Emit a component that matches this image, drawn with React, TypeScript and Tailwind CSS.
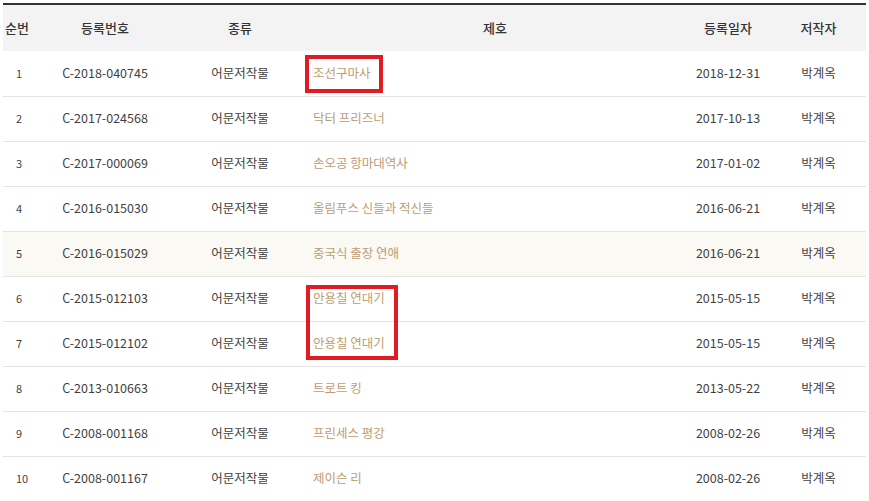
import React from "react";

interface Work {
  no: number;
  regNo: string;
  kind: string;
  title: string;
  date: string;
  author: string;
}

const WORKS: Work[] = [
  { no: 1, regNo: "C-2018-040745", kind: "어문저작물", title: "조선구마사", date: "2018-12-31", author: "박계옥" },
  { no: 2, regNo: "C-2017-024568", kind: "어문저작물", title: "닥터 프리즈너", date: "2017-10-13", author: "박계옥" },
  { no: 3, regNo: "C-2017-000069", kind: "어문저작물", title: "손오공 항마대역사", date: "2017-01-02", author: "박계옥" },
  { no: 4, regNo: "C-2016-015030", kind: "어문저작물", title: "올림푸스 신들과 적신들", date: "2016-06-21", author: "박계옥" },
  { no: 5, regNo: "C-2016-015029", kind: "어문저작물", title: "중국식 출장 연애", date: "2016-06-21", author: "박계옥" },
  { no: 6, regNo: "C-2015-012103", kind: "어문저작물", title: "안용칠 연대기", date: "2015-05-15", author: "박계옥" },
  { no: 7, regNo: "C-2015-012102", kind: "어문저작물", title: "안용칠 연대기", date: "2015-05-15", author: "박계옥" },
  { no: 8, regNo: "C-2013-010663", kind: "어문저작물", title: "트로트 킹", date: "2013-05-22", author: "박계옥" },
  { no: 9, regNo: "C-2008-001168", kind: "어문저작물", title: "프린세스 평강", date: "2008-02-26", author: "박계옥" },
  { no: 10, regNo: "C-2008-001167", kind: "어문저작물", title: "제이슨 리", date: "2008-02-26", author: "박계옥" },
];

export default function App() {
  return (
    <div
      className="relative h-[501px] w-[869px] overflow-hidden bg-white px-[3px] pt-[3px]"
      style={{ fontFamily: '"Noto Sans CJK KR", "Noto Sans", sans-serif' }}
    >
      <table className="w-full table-fixed border-collapse text-[12.5px] text-[#3f3f3f]">
        <colgroup>
          <col className="w-[32px]" />
          <col className="w-[140px]" />
          <col className="w-[130px]" />
          <col className="w-[380px]" />
          <col className="w-[86px]" />
          <col className="w-[95px]" />
        </colgroup>
        <thead>
          <tr className="h-[47px] border-t-2 border-[#333] bg-[#f3f3f3] text-[13px] text-[#333]">
            <th className="pl-[2px] text-left font-medium">순번</th>
            <th className="font-medium">등록번호</th>
            <th className="font-medium">종류</th>
            <th className="font-medium">제호</th>
            <th className="font-medium">등록일자</th>
            <th className="font-medium">저작자</th>
          </tr>
        </thead>
        <tbody>
          {WORKS.map((w) => (
            <tr
              key={w.no}
              className={`h-[45px] border-b border-[#e4e4e4] ${w.no === 5 ? "bg-[#faf9f4]" : ""}`}
            >
              <td className="pl-[13px] text-[11px]">{w.no}</td>
              <td className="text-center">{w.regNo}</td>
              <td className="text-center">{w.kind}</td>
              <td className="pl-[8px] text-[#bc9d72]">{w.title}</td>
              <td className="text-center">{w.date}</td>
              <td className="text-center">{w.author}</td>
            </tr>
          ))}
        </tbody>
      </table>

      {/* red highlight boxes */}
      <div className="absolute left-[305px] top-[55px] h-[38px] w-[78px] border-4 border-[#e01b24]" />
      <div className="absolute left-[306px] top-[285px] h-[75px] w-[92px] border-4 border-[#e01b24]" />
    </div>
  );
}
